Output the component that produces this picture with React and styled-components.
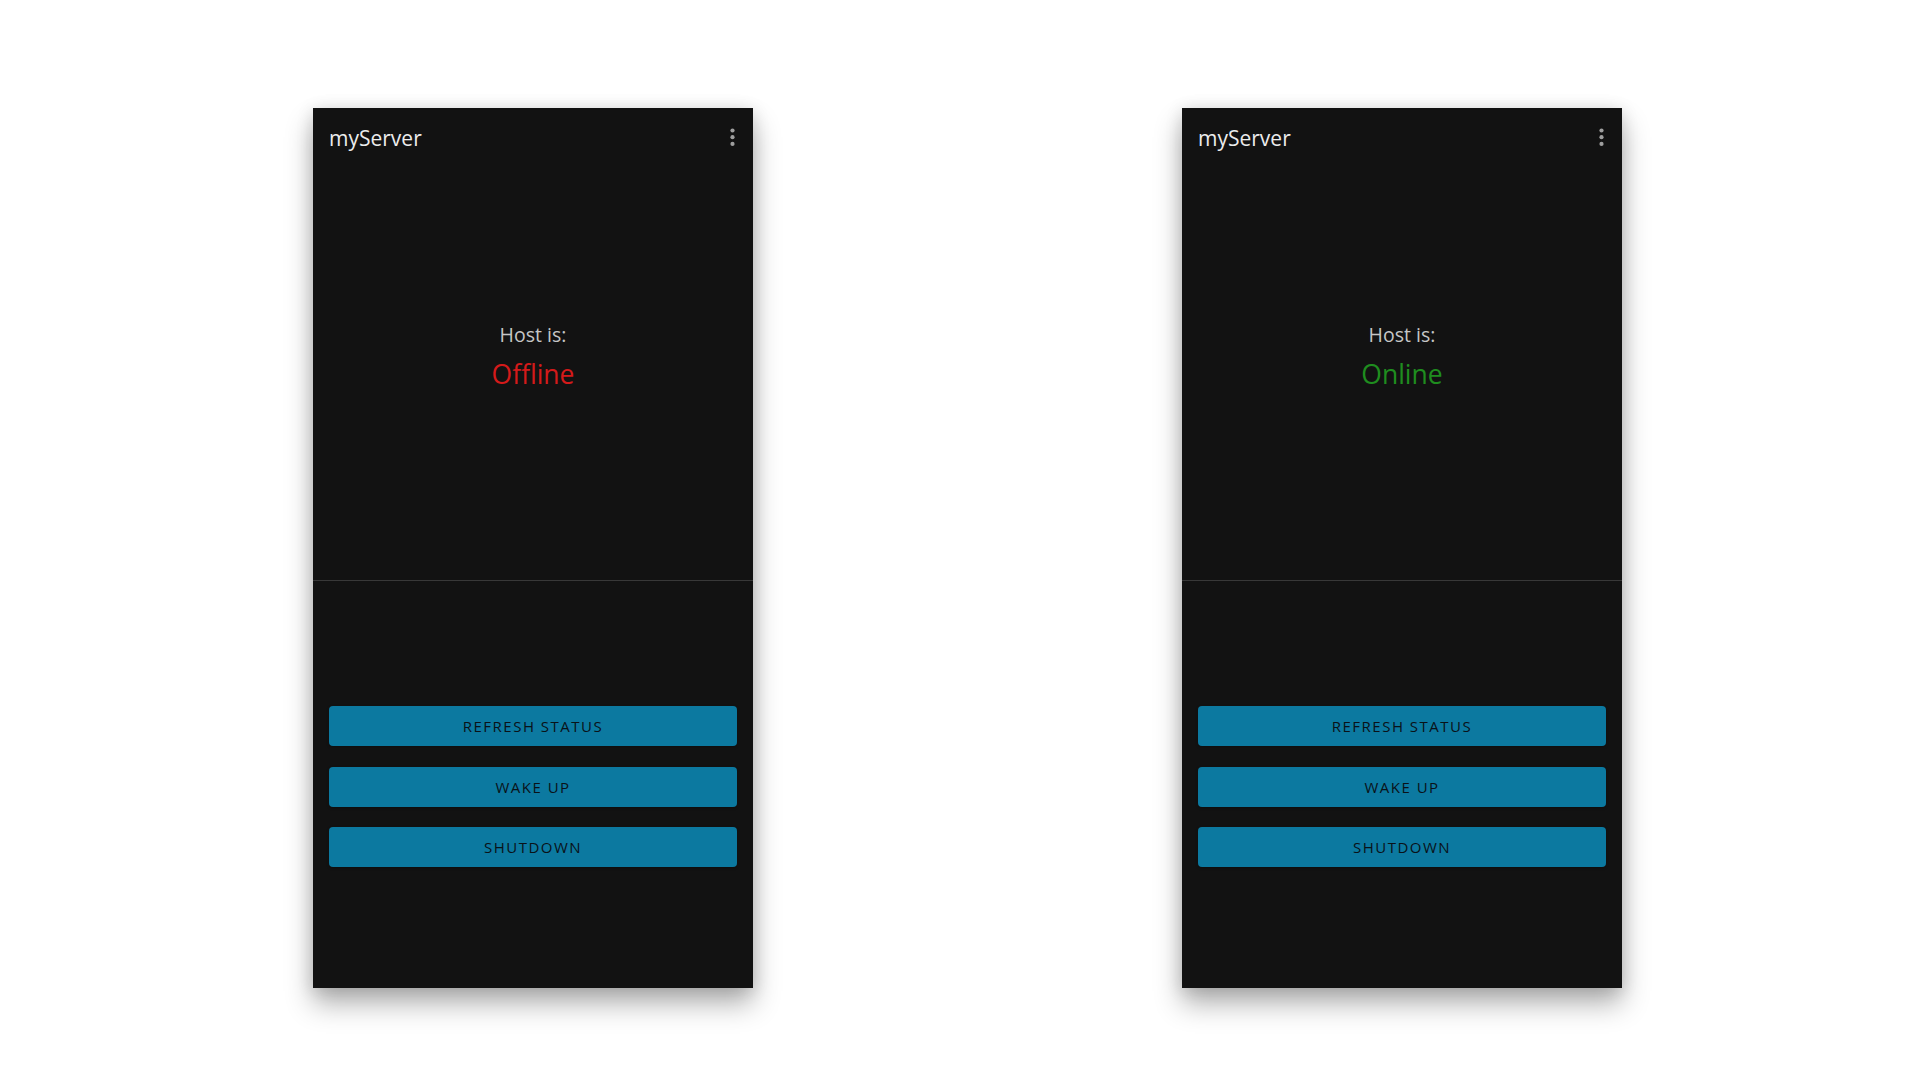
import React from "react";
import styled, { createGlobalStyle } from "styled-components";

const Global = createGlobalStyle`
  html, body { margin: 0; padding: 0; background: #ffffff; }
  body { font-family: "Open Sans", "Noto Sans", Arial, sans-serif; }
  * { box-sizing: border-box; }
`;

const Stage = styled.div`
  width: 1920px;
  height: 1080px;
  display: flex;
  align-items: flex-start;
  gap: 429px;
  padding: 108px 0 0 313px;
`;

const Phone = styled.div`
  width: 440px;
  height: 880px;
  background: #121212;
  display: flex;
  flex-direction: column;
  box-shadow: 0 16px 26px rgba(0, 0, 0, 0.3), 0 2px 16px rgba(0, 0, 0, 0.14);
`;

const Header = styled.header`
  height: 56px;
  display: flex;
  justify-content: space-between;
  align-items: flex-start;
  padding: 16px 18.5px 0 16px;
`;

const Title = styled.h1`
  margin: 0;
  font-size: 21px;
  line-height: 28px;
  font-weight: 400;
  color: #ececec;
`;

const Kebab = styled.svg`
  display: block;
  margin-top: 4px;
`;

const StatusArea = styled.section`
  height: 416px;
  padding-top: 157px;
  display: flex;
  flex-direction: column;
  align-items: center;
`;

const HostLabel = styled.div`
  font-size: 19.5px;
  line-height: 27px;
  color: #c6c6c6;
`;

const HostState = styled.div`
  margin-top: 8px;
  font-size: 26.5px;
  line-height: 36px;
  color: ${(p) => (p.$online ? "#1f8d1f" : "#d41a1a")};
`;

const Divider = styled.hr`
  margin: 0;
  border: 0;
  border-top: 1px solid #383838;
  height: 0;
`;

const Actions = styled.section`
  flex: 1;
  display: flex;
  flex-direction: column;
  gap: 20.5px;
  padding: 125px 16px 0;
`;

const ActionButton = styled.button`
  height: 40px;
  width: 100%;
  border: 0;
  border-radius: 4px;
  background: #0c79a0;
  color: #0a1218;
  font-family: "Open Sans", "Noto Sans", Arial, sans-serif;
  font-size: 15px;
  font-weight: 500;
  letter-spacing: 1.5px;
  text-transform: uppercase;
  cursor: pointer;
  box-shadow: 0 1px 3px rgba(0, 0, 0, 0.3);
`;

function MoreIcon() {
  return (
    <Kebab width="5" height="19" viewBox="0 0 5 19" aria-label="More options">
      <circle cx="2.5" cy="2.5" r="2.1" fill="#9e9e9e" />
      <circle cx="2.5" cy="9.2" r="2.1" fill="#9e9e9e" />
      <circle cx="2.5" cy="15.9" r="2.1" fill="#9e9e9e" />
    </Kebab>
  );
}

function ServerScreen({ online }) {
  return (
    <Phone>
      <Header>
        <Title>myServer</Title>
        <MoreIcon />
      </Header>
      <StatusArea>
        <HostLabel>Host is:</HostLabel>
        <HostState $online={online}>{online ? "Online" : "Offline"}</HostState>
      </StatusArea>
      <Divider />
      <Actions>
        <ActionButton>Refresh Status</ActionButton>
        <ActionButton>Wake Up</ActionButton>
        <ActionButton>Shutdown</ActionButton>
      </Actions>
    </Phone>
  );
}

export default function App() {
  return (
    <>
      <Global />
      <Stage>
        <ServerScreen online={false} />
        <ServerScreen online={true} />
      </Stage>
    </>
  );
}
